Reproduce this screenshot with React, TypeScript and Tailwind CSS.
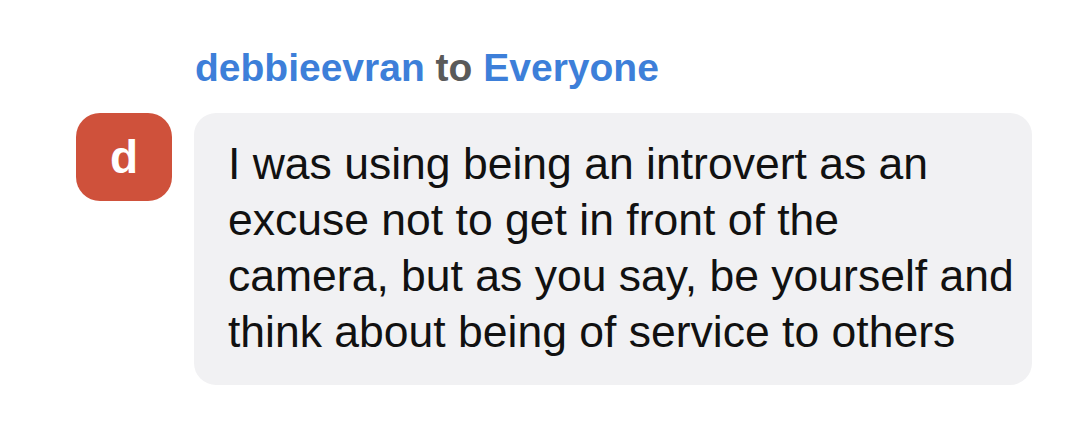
export default function App() {
  return (
    <div className="h-[430px] w-[1080px] bg-white font-['Liberation_Sans',Arial,sans-serif]">
      <div className="pl-[195px] pt-[46px] text-[39px] font-bold leading-[44px] text-[#3d7fd9]">
        debbieevran <span className="text-[#5a5a5a]">to</span> Everyone
      </div>
      <div className="mt-[23px] flex items-start gap-[22px] pl-[76px]">
        <div className="flex h-[88px] w-[96px] shrink-0 items-center justify-center rounded-[24px] bg-[#cf513b] text-[46px] font-bold text-white">
          d
        </div>
        <div className="w-[838px] rounded-[22px] bg-[#f1f1f3] pb-[25px] pl-[34px] pr-[10px] pt-[23px] text-[44.5px] leading-[56px] text-[#111]">
          I was using being an introvert as an
          <br />
          excuse not to get in front of the
          <br />
          camera, but as you say, be yourself and
          <br />
          think about being of service to others
        </div>
      </div>
    </div>
  );
}
